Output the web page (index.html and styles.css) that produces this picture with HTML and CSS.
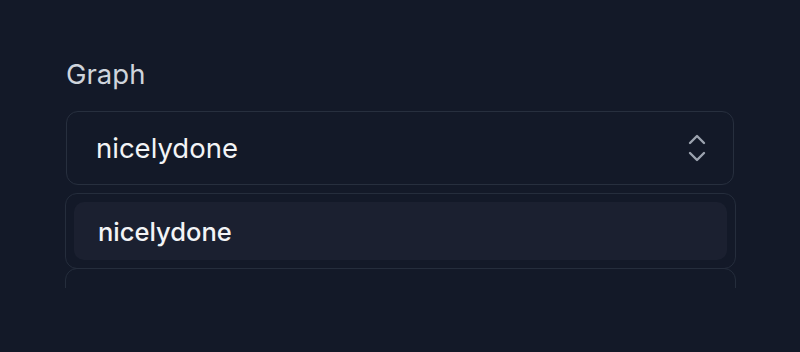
FILE: index.html
```html
<!DOCTYPE html>
<html>
<head>
<meta charset="utf-8">
<link rel="stylesheet" href="styles.css">
</head>
<body>
<div class="field">
  <div class="label">Graph</div>
  <div class="select">
    <span class="value">nicelydone</span>
    <svg class="chev" width="20" height="32" viewBox="0 0 20 32" fill="none" stroke="#9ca3af" stroke-width="2.4" stroke-linecap="round" stroke-linejoin="round">
      <path d="M3 11 L10 4 L17 11"/>
      <path d="M3 21 L10 28 L17 21"/>
    </svg>
  </div>
  <div class="clip">
    <div class="list">
      <div class="item">nicelydone</div>
    </div>
    <div class="list next">
      <div class="row">
        <span class="rowtext">i</span>
        <span class="rowicon"></span>
      </div>
    </div>
  </div>
</div>
</body>
</html>
```
FILE: styles.css
```css
html, body {
  margin: 0;
  padding: 0;
  background: #131928;
  font-family: Inter, "Noto Sans", sans-serif;
  height: 352px;
  overflow: hidden;
}
.field {
  padding: 57px 66px 0 66px;
  display: flex;
  flex-direction: column;
}
.label {
  color: #cfd4dc;
  font-size: 27.5px;
  line-height: 35px;
  height: 35px;
  margin-bottom: 19px;
}
.select {
  height: 72px;
  border: 1px solid #272f3e;
  border-radius: 12px;
  display: flex;
  align-items: center;
  justify-content: space-between;
  padding: 0 26px 0 29px;
}
.value {
  color: #f3f4f6;
  font-size: 27.5px;
}
.chev {
  display: block;
}
.clip {
  margin-top: 8px;
  margin-left: -1px;
  margin-right: -2px;
  height: 95px;
  overflow: hidden;
}
.list {
  border: 1px solid #252d3c;
  border-radius: 12px;
  padding: 8px 8px;
}
.item {
  background: #1b2030;
  border-radius: 10px;
  height: 58px;
  display: flex;
  align-items: center;
  padding-left: 24px;
  color: #f3f4f6;
  font-size: 25.5px;
  font-weight: 500;
}
.next {
  margin-top: -1px;
  height: 80px;
}
.row {
  display: flex;
  justify-content: space-between;
  padding: 9px 30px 0 19px;
}
.rowtext {
  color: #d1d5db;
  font-size: 25px;
  font-weight: 500;
}
.rowicon {
  width: 11px;
  height: 11px;
  border: 2px solid #9ca3af;
  border-radius: 50%;
  margin-top: 8px;
}
```
